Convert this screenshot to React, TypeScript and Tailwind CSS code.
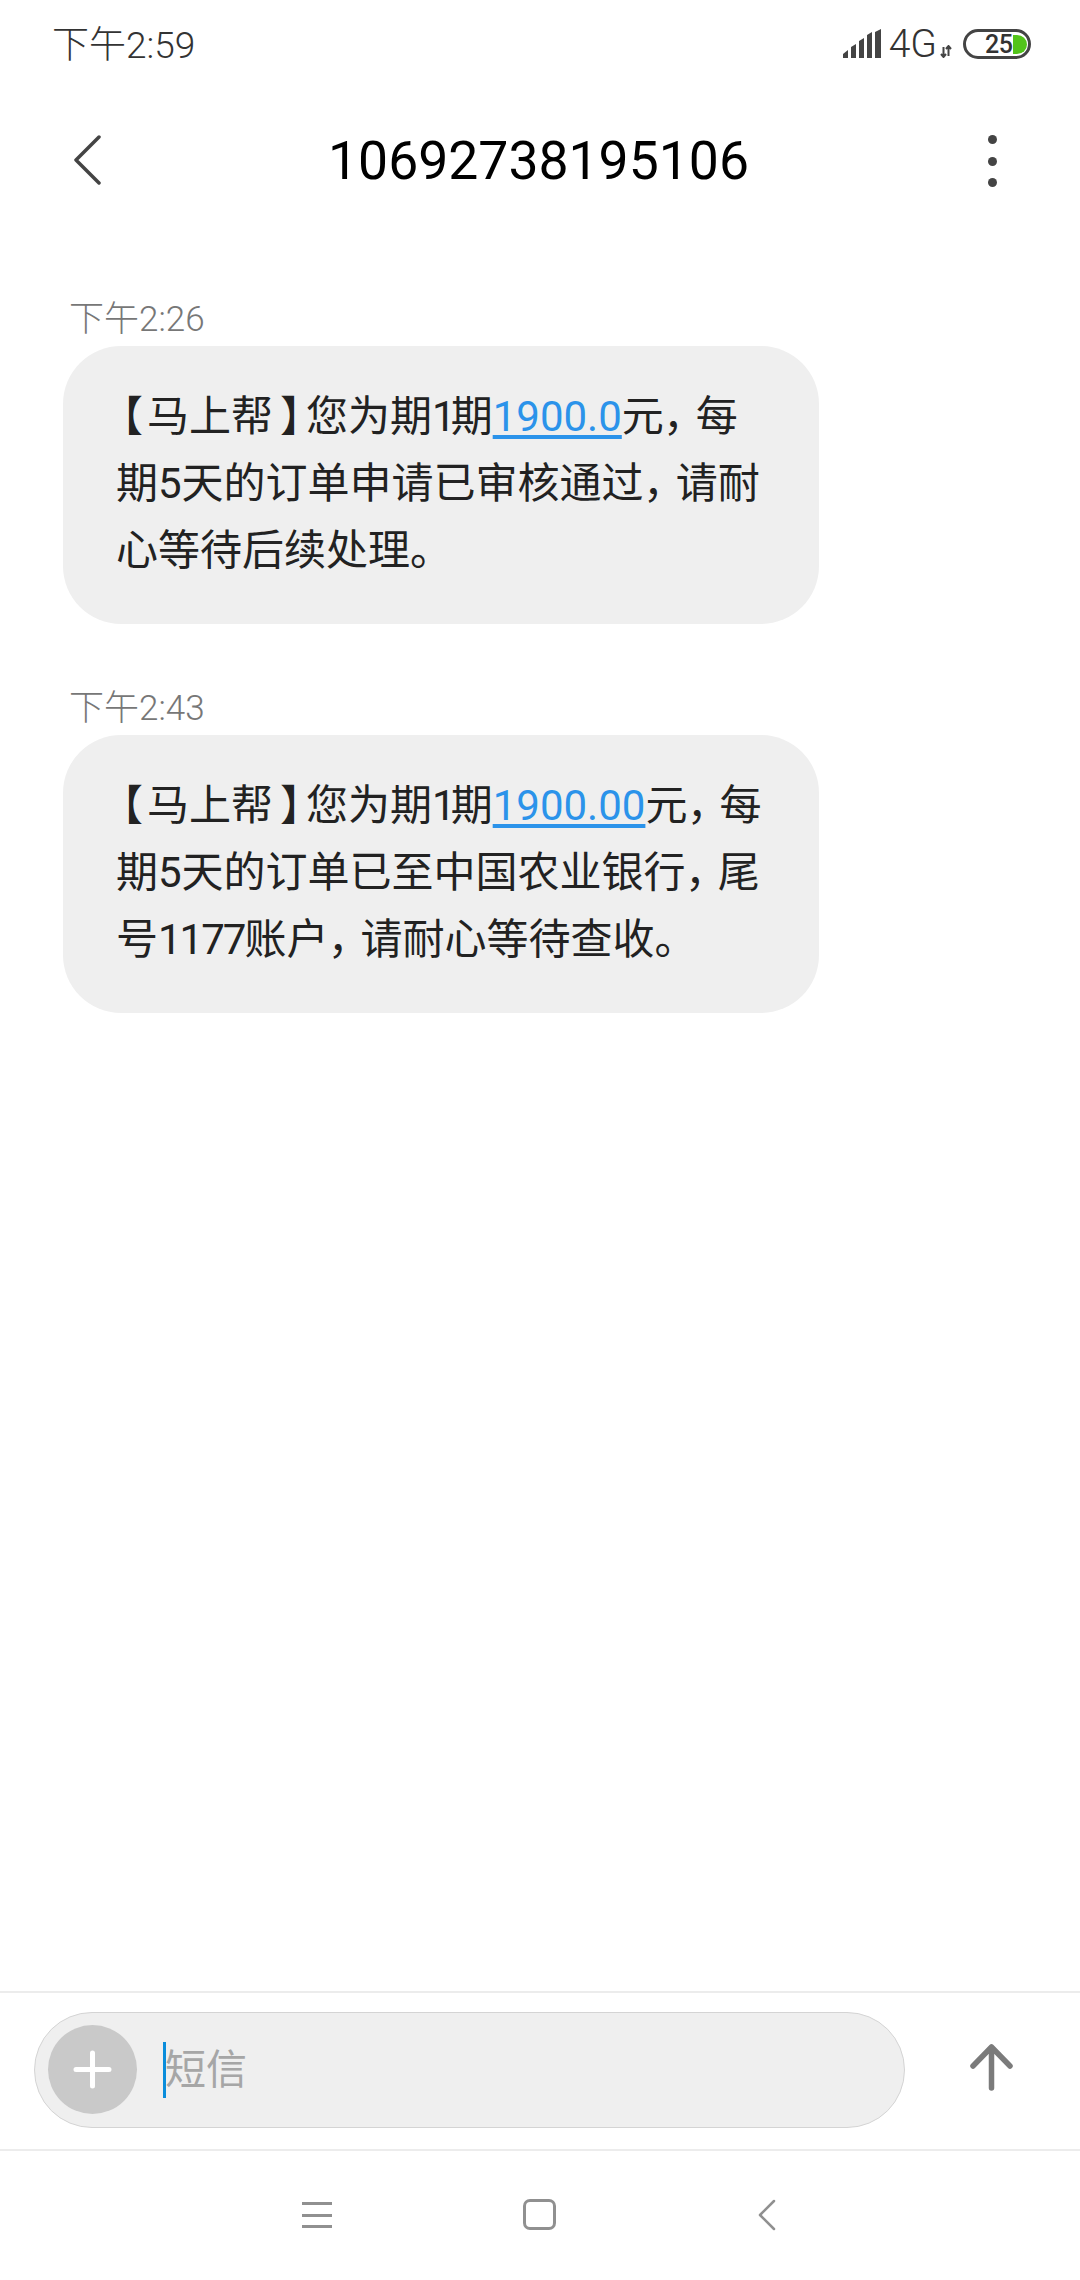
const FONT = "font-['Roboto','Noto_Sans_CJK_SC',sans-serif]"

function StatusBar() {
  return (
    <div className="flex h-[90px] items-start justify-between pl-[52px] pr-[49px] pt-[25px]">
      <span className="text-[37px] font-light leading-[42px] text-[#333]">下午2:59</span>
      <div className="mt-[4px] flex items-start">
        <svg width="40" height="29" viewBox="0 0 40 29" fill="#444">
          <path d="M0 29v-4l5-4v8zM8 29V18l5-3v14zM16 29V12l5-3v20zM24 29V6l5-3v26zM32 29V3l6-3v29z" />
        </svg>
        <span className="ml-[6px] mt-[-4px] text-[39px] font-light leading-[38px] text-[#333]">4G</span>
        <svg className="ml-[3px] mt-[16px]" width="12" height="13" viewBox="0 0 12 13" fill="none" stroke="#444" strokeWidth="2">
          <path d="M3.500 2v10M1 9l2.500 3L6 9M8.500 11V1M6 4l2.500-3L11 4" />
        </svg>
        <div className="ml-[11px] flex h-[30px] w-[68px] items-center rounded-full border-[3px] border-[#444] pl-[19px]">
          <span className="text-[25px] font-medium leading-none tracking-[-0.5px] text-[#333]">25</span>
          <svg className="ml-[1px]" width="14" height="19" viewBox="0 0 14 19" fill="#52c41a">
            <path d="M0 0h4a10 9.500 0 0 1 0 19H0z" />
          </svg>
        </div>
      </div>
    </div>
  )
}

function Header() {
  return (
    <div className="flex h-[140px] items-start pl-[73px] pr-[83px] pt-[45px]">
      <svg width="29" height="50" viewBox="0 0 29 50" fill="none" stroke="#444" strokeWidth="3.500" strokeLinecap="round" strokeLinejoin="round">
        <path d="M26 2 3 25l23 23" />
      </svg>
      <span className="ml-[226px] mt-[-5px] text-[53.500px] leading-[62px] text-black">10692738195106</span>
      <div className="ml-auto flex h-[52px] flex-col justify-between">
        <span className="size-[9px] rounded-full bg-[#444]" />
        <span className="size-[9px] rounded-full bg-[#444]" />
        <span className="size-[9px] rounded-full bg-[#444]" />
      </div>
    </div>
  )
}

function Message({ time, lines }: { time: string; lines: React.ReactNode[] }) {
  return (
    <div>
      <div className="pl-[69px] text-[35px] font-light leading-[40px] text-[#777]">{time}</div>
      <div className="ml-[63px] mt-[6px] flex h-[278px] w-[756px] flex-col justify-center rounded-[58px] bg-[#efefef] pb-[4px] pl-[53px]">
        {lines.map((line, i) => (
          <div key={i} className="whitespace-nowrap text-[42px] leading-[67px] text-[#222]">
            {line}
          </div>
        ))}
      </div>
    </div>
  )
}

const Link = ({ children }: { children: string }) => (
  <span className="text-[#2b93ea] underline underline-offset-[4px]">{children}</span>
)
// punctuation set tight, the phone font has narrow brackets and commas
const Comma = () => <span className="ml-[2px] mr-[9px] [font-feature-settings:'palt']">，</span>
const Open = () => <span className="ml-[5px] mr-[5px] [font-feature-settings:'palt']">【</span>
const Close = () => <span className="ml-[8px] mr-[4px] [font-feature-settings:'palt']">】</span>
const One = () => <span className="tracking-[-5px]">1</span>

export default function App() {
  return (
    <div className={`flex h-[2280px] w-[1080px] flex-col overflow-hidden bg-white ${FONT}`}>
      <StatusBar />
      <Header />
      <div className="flex flex-1 flex-col gap-[65px] pt-[70px]">
        <Message
          time="下午2:26"
          lines={[
            <><Open />马上帮<Close />您为期<One />期<Link>1900.0</Link>元<Comma />每</>,
            <>期5天的订单申请已审核通过<Comma />请耐</>,
            <>心等待后续处理。</>,
          ]}
        />
        <Message
          time="下午2:43"
          lines={[
            <><Open />马上帮<Close />您为期<One />期<Link>1900.00</Link>元<Comma />每</>,
            <>期5天的订单已至中国农业银行<Comma />尾</>,
            <>号<span className="tracking-[-2px]">1177</span>账户<Comma />请耐心等待查收。</>,
          ]}
        />
      </div>
      <div className="flex h-[160px] items-center border-y-2 border-[#ececec] pb-[3px] pl-[34px]">
        <div className="flex h-[116px] w-[871px] items-center rounded-full border border-[#d4d4d4] bg-[#efefef] pl-[13px]">
          <div className="flex size-[89px] items-center justify-center rounded-full bg-[#c9c9c9]">
            <svg width="39" height="39" viewBox="0 0 39 39" stroke="#fff" strokeWidth="5" strokeLinecap="round">
              <path d="M19.500 3v33M3 19.500h33" />
            </svg>
          </div>
          <span className="ml-[26px] h-[56px] w-[3px] bg-[#0a8ddb]" />
          <span className="ml-[-1px] text-[41px] leading-[56px] text-[#a6a6a6]">短信</span>
        </div>
        <svg className="mb-[6px] ml-[65px]" width="43" height="48" viewBox="0 0 43 48" fill="none" stroke="#7b7b7b" strokeWidth="5.500" strokeLinecap="round" strokeLinejoin="round">
          <path d="M21.500 45V4M3 23 21.500 4 40 23" />
        </svg>
      </div>
      <div className="flex h-[129px] items-start pl-[302px] pt-[48px]">
        <div className="mt-[3px] flex h-[26px] w-[30px] flex-col justify-between">
          <span className="h-[3px] bg-[#909090]" />
          <span className="h-[3px] bg-[#909090]" />
          <span className="h-[3px] bg-[#909090]" />
        </div>
        <span className="ml-[191px] h-[31px] w-[33px] rounded-[7px] border-[3px] border-[#909090]" />
        <svg className="ml-[202px]" width="18" height="32" viewBox="0 0 18 32" fill="none" stroke="#909090" strokeWidth="2.500" strokeLinecap="round" strokeLinejoin="round">
          <path d="M16 2 2 16l14 14" />
        </svg>
      </div>
    </div>
  )
}
